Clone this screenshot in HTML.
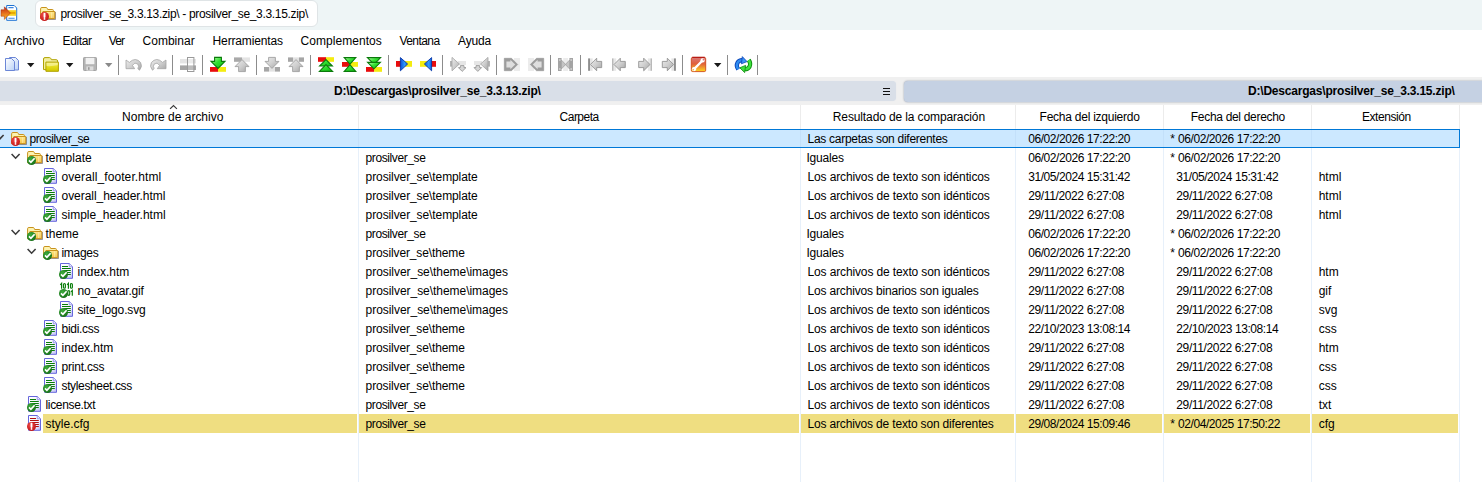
<!DOCTYPE html><html><head><meta charset="utf-8"><title>WinMerge</title><style>
*{box-sizing:border-box;margin:0;padding:0}
html,body{width:1482px;height:482px;overflow:hidden;background:#fff}
body{font-family:"Liberation Sans",sans-serif;font-size:12px;color:#000;position:relative}
.abs{position:absolute}
.t{position:absolute;white-space:pre;line-height:14px;height:14px}
#title{left:0;top:0;width:1482px;height:30px;background:#eef5f6}
#tab{left:35px;top:0;width:283px;height:27px;background:#fff;border-radius:6px;border:1px solid #dfe4e6}
#pbar{left:0;top:77px;width:1482px;height:28px;background:#f0f0f0}
#p1{left:-4px;top:81px;width:900px;height:20px;background:#d9dfe8;border-radius:4px;box-shadow:0 0 1px #d9dfe8}
#p2{left:903.5px;top:80.5px;width:590px;height:21px;background:#c5d1e3;border-radius:4px;box-shadow:0 0 2px #8a94a4}
.b{font-weight:bold}
.vl{position:absolute;top:128px;width:1px;height:354px;background:rgba(175,204,238,0.300)}
.hl{position:absolute;top:105px;width:1px;height:23px;background:#ececec}
.sel{position:absolute;left:-2px;width:1462px;height:19px;background:#cce8ff;border:1px solid #0078d7}
.dif{position:absolute;height:19px;background:#efde81}
.sep{position:absolute;top:55px;width:1px;height:20px;background:#8c8c8c}
svg{position:absolute;overflow:visible}
</style></head><body>
<svg width="0" height="0" style="position:absolute">
<defs>
<linearGradient id="gFold" x1="0" y1="0" x2="1" y2="1"><stop offset="0" stop-color="#fff6c4"/><stop offset="0.55" stop-color="#fbd96a"/><stop offset="1" stop-color="#eeb236"/></linearGradient>
<linearGradient id="gFoldY" x1="0" y1="0" x2="0" y2="1"><stop offset="0" stop-color="#f6f08a"/><stop offset="0.5" stop-color="#e4dc1c"/><stop offset="1" stop-color="#d2c800"/></linearGradient>
<radialGradient id="gGreen" cx="0.4" cy="0.35" r="0.7"><stop offset="0" stop-color="#3fae3f"/><stop offset="1" stop-color="#146c14"/></radialGradient>
<radialGradient id="gRed" cx="0.4" cy="0.35" r="0.7"><stop offset="0" stop-color="#f04a4a"/><stop offset="1" stop-color="#c01414"/></radialGradient>
<linearGradient id="gPage" x1="0" y1="0" x2="1" y2="1"><stop offset="0" stop-color="#ffffff"/><stop offset="0.6" stop-color="#f4f4ff"/><stop offset="1" stop-color="#b8b8f4"/></linearGradient>
<linearGradient id="gDoc" x1="0" y1="0" x2="1" y2="1"><stop offset="0" stop-color="#ffffff"/><stop offset="1" stop-color="#b9d2f7"/></linearGradient>
<linearGradient id="gGray" x1="0" y1="0" x2="1" y2="1"><stop offset="0" stop-color="#ececec"/><stop offset="0.5" stop-color="#cfcfcf"/><stop offset="1" stop-color="#a4a4a4"/></linearGradient>
<linearGradient id="gGrn" x1="0" y1="0" x2="1" y2="1"><stop offset="0" stop-color="#c8ffb8"/><stop offset="0.45" stop-color="#30e030"/><stop offset="1" stop-color="#10b810"/></linearGradient>
<linearGradient id="gBlue" x1="0" y1="0" x2="1" y2="0"><stop offset="0" stop-color="#0a4fd8"/><stop offset="0.6" stop-color="#2f9bff"/><stop offset="1" stop-color="#0a58e0"/></linearGradient>
<linearGradient id="gOpt" x1="0" y1="0" x2="0" y2="1"><stop offset="0" stop-color="#d87878"/><stop offset="0.45" stop-color="#e0603a"/><stop offset="1" stop-color="#ffd820"/></linearGradient>

<g id="ov-ok"><circle cx="4.500" cy="11.450" r="4.500" fill="url(#gGreen)"/><path d="M2 11.4 L3.9 13.3 L7.6 9.2" fill="none" stroke="#fff" stroke-width="1.7"/></g>
<g id="ov-bad"><circle cx="4.500" cy="11.450" r="4.500" fill="url(#gRed)"/><path d="M4.5 8.6 V12" stroke="#fff" stroke-width="1.9" stroke-linecap="round"/><circle cx="4.5" cy="13.9" r="0.9" fill="#fff"/></g>

<g id="folder">
 <path d="M0.600 13.600 V3.700 Q0.600 2.500 1.900 2.500 H6 Q6.900 2.500 7.300 3.400 L7.700 4.500 H12.300 Q13.400 4.500 13.400 5.600 V13.600 Z" fill="#fdf3b0" stroke="#c8921c" stroke-width="1"/>
 <path d="M15.500 7 V14.500 H3" fill="none" stroke="#50506a" stroke-width="1" opacity="0.600"/>
 <path d="M2.900 6.500 H14.800 V13.700 H0.700 Z" fill="url(#gFold)" stroke="#c8921c" stroke-width="1"/>
 <path d="M11.500 7.200 V13 M13 7.200 V13" stroke="#fff6c0" stroke-width="0.700" opacity="0.800"/>
</g>
<symbol id="i-fd" viewBox="0 0 16 16" overflow="visible"><use href="#folder"/><use href="#ov-bad"/></symbol>
<symbol id="i-fs" viewBox="0 0 16 16" overflow="visible"><use href="#folder"/><use href="#ov-ok"/></symbol>

<g id="page">
 <path d="M1.5 0.5 H10.3 L13.5 3.7 V15.300 H1.500 Z" fill="url(#gPage)" stroke="#6666dc" stroke-width="1"/>
 <path d="M10.2 0.6 V3.8 H13.4" fill="#e6e6ff" stroke="#7a7ae0" stroke-width="0.7"/>
</g>
<symbol id="i-ts" viewBox="0 0 16 16" overflow="visible"><use href="#page"/>
 <path d="M3 3.5 H9 M3 5.500 H11.800 M5 7.500 H11.800 M7 9.500 H11.800 M8 11.500 H11.800" stroke="#0a7d0a" stroke-width="1.050"/><use href="#ov-ok"/></symbol>
<symbol id="i-td" viewBox="0 0 16 16" overflow="visible"><use href="#page"/>
 <path d="M3 3.5 H9 M3 5.500 H11.800 M5 7.500 H11.800 M7 9.500 H11.800 M8 11.500 H11.800" stroke="#b01010" stroke-width="1.050"/><use href="#ov-bad"/></symbol>
<symbol id="i-bs" viewBox="0 0 16 16" overflow="visible"><path d="M1.30 2.80 L2.60 1.40 V6.70 M8.10 2.80 L9.40 1.40 V6.70 M12.00 9.90 L13.30 8.50 V13.80" fill="none" stroke="#0a7d0a" stroke-width="1.2" stroke-linejoin="miter"/><rect x="4.50" y="1.50" width="1.9" height="4.7" rx="0.95" fill="none" stroke="#0a7d0a" stroke-width="1.15"/><rect x="11.50" y="1.50" width="1.9" height="4.7" rx="0.95" fill="none" stroke="#0a7d0a" stroke-width="1.15"/><rect x="8.80" y="8.60" width="1.9" height="4.7" rx="0.95" fill="none" stroke="#0a7d0a" stroke-width="1.15"/><use href="#ov-ok"/></symbol>
<symbol id="i-app" viewBox="0 0 18 16" overflow="visible">
 <path d="M6.700 0.500 H14.200 L16.700 3 V15.300 H6.700 Z" fill="#fff" stroke="#1c72d4" stroke-width="1"/>
 <path d="M8.400 2.600 H13.600 M8.400 13.300 H14.600" stroke="#3c86e0" stroke-width="1.100"/>
 <rect x="7.200" y="5.200" width="9" height="5.600" fill="#f8d020"/>
 <rect x="9.400" y="7" width="6" height="1.900" fill="#e8a800"/>
 <linearGradient id="gArr" x1="0" y1="0" x2="0" y2="1"><stop offset="0" stop-color="#c02810"/><stop offset="0.55" stop-color="#e87820"/><stop offset="1" stop-color="#ffc020"/></linearGradient>
 <path d="M1 4.800 H4.400 V1.800 L10.400 8 L4.400 14.400 V11.200 H1 Z" fill="url(#gArr)" stroke="#a82810" stroke-width="0.500"/>
</symbol>
</defs>
</svg>

<div id="title" class="abs"></div><div id="tab" class="abs"></div>
<svg style="left:40px;top:5px" width="16" height="16"><use href="#i-fd"/></svg>
<svg style="left:0px;top:5px" width="18" height="16"><use href="#i-app"/></svg>
<div id="pbar" class="abs"></div><div id="p1" class="abs"></div><div id="p2" class="abs"></div>
<div class="abs" style="left:883px;top:88px;width:7px;height:1px;background:#111"></div>
<div class="abs" style="left:883px;top:91px;width:7px;height:1px;background:#111"></div>
<div class="abs" style="left:883px;top:94px;width:7px;height:1px;background:#111"></div>
<div class="hl" style="left:358px"></div>
<div class="hl" style="left:800px"></div>
<div class="hl" style="left:1015px"></div>
<div class="hl" style="left:1163px"></div>
<div class="hl" style="left:1311px"></div>
<div class="hl" style="left:1459px"></div>
<svg style="left:169px;top:104px" width="10" height="6"><path d="M1.5 4.5 L4.5 1.5 L7.5 4.5" fill="none" stroke="#3c3c3c" stroke-width="1.150" stroke-linecap="square"/></svg>
<div class="sep" style="left:118px"></div>
<div class="sep" style="left:172px"></div>
<div class="sep" style="left:202px"></div>
<div class="sep" style="left:256px"></div>
<div class="sep" style="left:310px"></div>
<div class="sep" style="left:388px"></div>
<div class="sep" style="left:442px"></div>
<div class="sep" style="left:496px"></div>
<div class="sep" style="left:550px"></div>
<div class="sep" style="left:580px"></div>
<div class="sep" style="left:682px"></div>
<div class="sep" style="left:727px"></div>
<div class="sep" style="left:757px"></div>
<svg style="left:0;top:52px" width="770" height="26" viewBox="0 52 770 26">
<!-- dropdown arrows -->
<path d="M27 63 h7.4 l-3.7 4.2z M66 63 h7.4 l-3.7 4.2z M714 63 h7.4 l-3.7 4.2z" fill="#1a1a1a"/>
<path d="M105 63 h7.4 l-3.7 4.2z" fill="#8a8a8a"/>
<!-- new docs -->
<g>
 <path d="M9.5 57.5 h6 l3 3 v9.5 h-9z" fill="url(#gDoc)" stroke="#6b86d6" stroke-width="1"/>
 <path d="M5.5 58.5 h6 l3 3 v9 h-9z" fill="url(#gDoc)" stroke="#6b86d6" stroke-width="1"/>
</g>
<!-- open folder (yellow) -->
<g>
 <path d="M43.500 69.600 V59 Q43.500 57.600 45 57.600 H49.400 Q50.400 57.600 50.900 58.600 L51.400 59.700 H56.200 Q57.600 59.700 57.600 61 V69.600 Z" fill="#f2eea0" stroke="#b0a200" stroke-width="1"/>
 <path d="M45.900 62.100 H58.400 V71.300 H45.900 Z" fill="url(#gFoldY)" stroke="#b0a200" stroke-width="1"/>
 <path d="M46.600 62.900 H57.700 V65 Q52 66.600 46.600 66Z" fill="#f6f29a" opacity="0.700"/>
</g>
<!-- save (gray) -->
<g>
 <rect x="83.5" y="57.5" width="13" height="13" rx="0.8" fill="#b4b4b4" stroke="#a2a2a2"/>
 <rect x="85.6" y="57.8" width="8.8" height="6.4" fill="#f1f1f1"/>
 <rect x="86.4" y="66.4" width="7" height="4.2" fill="#dcdcdc"/>
 <rect x="88" y="67.2" width="1.6" height="2.6" fill="#9a9a9a"/>
</g>
<!-- undo / redo -->
<g fill="url(#gGray)" stroke="#a4a4a4" stroke-width="0.800">
 <path d="M126 60 L129.400 62.400 Q135.500 56.600 140.600 62.500 Q142.800 66.500 139.500 70.200 L137.800 68.600 Q139.600 66.200 137.600 63.900 Q134.800 61.700 132.400 65.400 L134.700 68.700 L126 68.700 Z"/>
 <path d="M166.000 60.000 L162.600 62.400 Q156.500 56.600 151.400 62.500 Q149.200 66.500 152.500 70.200 L154.200 68.600 Q152.400 66.200 154.400 63.900 Q157.200 61.700 159.600 65.400 L157.300 68.700 L166.000 68.700 Z"/>
</g>
<!-- select line difference -->
<g>
 <rect x="180" y="59" width="16" height="4.400" fill="#e4e4e4"/>
 <rect x="180" y="65.400" width="16" height="4.600" fill="#a6a6a6"/>
 <rect x="187.500" y="57.500" width="6.400" height="14" fill="#fff" fill-opacity="0.250" stroke="#9a9a9a" stroke-width="1"/>
</g>
<!-- next diff -->
<g>
 <rect x="210" y="67" width="8" height="4.8" fill="#e80c0c"/><rect x="218" y="67" width="8" height="4.8" fill="#f4ec10"/>
 <path d="M214.6 57.4 h6.8 v4 h3.6 l-7 7 l-7 -7 h3.6z" fill="url(#gGrn)" stroke="#0a7a0a" stroke-width="1.100"/>
</g>
<!-- prev diff (gray) -->
<g>
 <rect x="234" y="57.4" width="8" height="4.4" fill="#a9a9a9"/><rect x="242" y="57.4" width="8" height="4.4" fill="#e4e4e4"/>
 <path d="M238.6 71.6 h6.8 v-5 h3.6 l-7 -7 l-7 7 h3.6z" fill="url(#gGray)" stroke="#a0a0a0" stroke-width="0.9"/>
</g>
<!-- next conflict gray -->
<g>
 <rect x="264" y="67" width="5" height="4.6" fill="#a6a6a6"/><rect x="269" y="67" width="6" height="4.6" fill="#e2e2e2"/><rect x="275" y="67" width="5" height="4.6" fill="#a6a6a6"/>
 <path d="M268.6 57.4 h6.8 v4 h3.6 l-7 7 l-7 -7 h3.6z" fill="url(#gGray)" stroke="#a0a0a0" stroke-width="0.9"/>
</g>
<!-- prev conflict gray -->
<g>
 <rect x="288" y="57.4" width="5" height="4.4" fill="#a6a6a6"/><rect x="293" y="57.4" width="6" height="4.4" fill="#e2e2e2"/><rect x="299" y="57.4" width="5" height="4.4" fill="#a6a6a6"/>
 <path d="M292.6 71.6 h6.8 v-5 h3.6 l-7 -7 l-7 7 h3.6z" fill="url(#gGray)" stroke="#a0a0a0" stroke-width="0.9"/>
</g>
<!-- first diff -->
<g>
 <rect x="318" y="57.2" width="8" height="4.6" fill="#e80c0c"/><rect x="326" y="57.2" width="8" height="4.6" fill="#f4ec10"/>
 <path d="M326 59.6 l6.4 6.4 h-12.8z" fill="url(#gGrn)" stroke="#0a7a0a" stroke-width="1.100"/>
 <path d="M326 64.6 l6.6 6.8 h-13.2z" fill="url(#gGrn)" stroke="#0a7a0a" stroke-width="1.100"/>
</g>
<!-- current diff -->
<g>
 <rect x="342" y="62" width="8" height="4.8" fill="#e80c0c"/><rect x="350" y="62" width="8" height="4.8" fill="#f4ec10"/>
 <path d="M344.2 57.6 h11.6 l-5.8 6.6z" fill="url(#gGrn)" stroke="#0a7a0a" stroke-width="1.100"/>
 <path d="M344.2 71.4 h11.6 l-5.8 -6.6z" fill="url(#gGrn)" stroke="#0a7a0a" stroke-width="1.100"/>
</g>
<!-- last diff -->
<g>
 <rect x="366" y="67" width="8" height="4.8" fill="#e80c0c"/><rect x="374" y="67" width="8" height="4.8" fill="#f4ec10"/>
 <path d="M367.4 57.6 h13.2 l-6.6 6.8z" fill="url(#gGrn)" stroke="#0a7a0a" stroke-width="1.100"/>
 <path d="M367.6 62.4 h12.8 l-6.4 6.4z" fill="url(#gGrn)" stroke="#0a7a0a" stroke-width="1.100"/>
</g>
<!-- copy right -->
<g>
 <rect x="396" y="61" width="8" height="5.8" fill="#e80c0c"/><rect x="404" y="61" width="8" height="5.8" fill="#f4ec10"/>
 <path d="M400.4 57.6 l7.2 6.4 l-7.2 6.8z" fill="url(#gBlue)" stroke="#0838a8" stroke-width="0.9"/>
</g>
<!-- copy left -->
<g>
 <rect x="420" y="61" width="8" height="5.8" fill="#f4ec10"/><rect x="428" y="61" width="8" height="5.8" fill="#e80c0c"/>
 <path d="M431.6 57.6 l-7.2 6.4 l7.2 6.8z" fill="url(#gBlue)" stroke="#0838a8" stroke-width="0.9"/>
</g>
<!-- copy right & advance (gray) -->
<g>
 <rect x="450" y="61" width="2.4" height="5.6" fill="#b4b4b4"/><rect x="458" y="61" width="8" height="4" fill="#e6e6e6"/>
 <path d="M452 57.4 l7.4 6.6 l-7.4 6.8z" fill="url(#gGray)" stroke="#a2a2a2" stroke-width="0.8"/>
 <path d="M460.4 65.6 h3.6 v2 h2 l-3.8 3.8 l-3.8 -3.8 h2z" fill="#d6d6d6" stroke="#9a9a9a" stroke-width="0.900"/>
</g>
<g>
 <rect x="487.6" y="61" width="2.4" height="5.6" fill="#b4b4b4"/><rect x="474" y="61" width="8" height="4" fill="#e6e6e6"/>
 <path d="M488 57.4 l-7.4 6.6 l7.4 6.8z" fill="url(#gGray)" stroke="#a2a2a2" stroke-width="0.8"/>
 <path d="M476 65.6 h3.600 v2 h2 l-3.800 3.800 l-3.800 -3.800 h2z" fill="#d6d6d6" stroke="#9a9a9a" stroke-width="0.900"/>
</g>
<!-- all right (gray) -->
<g>
 <rect x="514" y="58" width="6" height="13" fill="#ececec"/>
 <path d="M504.300 58.300 h7.200 l6.200 6.200 l-6.200 6.200 h-7.200z" fill="#9c9c9c" stroke="#949494" stroke-width="0.600"/>
 <path d="M506.400 61.600 h4 v-1.800 l4.800 4.700 l-4.800 4.700 v-1.800 h-4z" fill="#dedede"/>
</g>
<g>
 <rect x="528" y="58" width="6" height="13" fill="#ececec"/>
 <path d="M543.700 58.300 h-7.200 l-6.200 6.200 l6.200 6.200 h7.200z" fill="#9c9c9c" stroke="#949494" stroke-width="0.600"/>
 <path d="M541.600 61.600 h-4 v-1.800 l-4.800 4.700 l4.800 4.700 v-1.800 h4z" fill="#dedede"/>
</g>
<!-- auto merge -->
<g>
 <rect x="563.200" y="58" width="4.800" height="13" fill="#ececec"/>
 <rect x="558" y="58" width="3.600" height="13" fill="#a4a4a4"/><rect x="569.400" y="58" width="3.600" height="13" fill="#a4a4a4"/>
 <path d="M561.400 60 L565.600 64.500 L561.400 69z M569.600 60 L565.400 64.500 L569.600 69z" fill="#c4c4c4" stroke="#9c9c9c" stroke-width="0.700"/>
 <rect x="559" y="59" width="1.600" height="2" fill="#c8c8c8"/><rect x="559" y="68" width="1.600" height="2" fill="#c8c8c8"/><rect x="570.400" y="59" width="1.600" height="2" fill="#c8c8c8"/><rect x="570.400" y="68" width="1.600" height="2" fill="#c8c8c8"/>
</g>
<!-- nav arrows gray -->
<rect x="590" y="58.400" width="2.600" height="12.400" fill="#e4e4e4"/><rect x="613.200" y="58.400" width="3" height="12.400" fill="#e8e8e8"/>
<rect x="647.800" y="58.400" width="3" height="12.400" fill="#e8e8e8"/><rect x="671.400" y="58.400" width="2.600" height="12.400" fill="#e4e4e4"/>
<g fill="url(#gGray)" stroke="#939393" stroke-width="0.900">
 <path d="M590.400 64.500 l6.300 -6.300 v3.200 h5 v6.200 h-5 v3.200z"/>
 <path d="M614 64.500 l6.300 -6.300 v3.200 h5 v6.200 h-5 v3.200z"/>
 <path d="M650 64.500 l-6.300 -6.300 v3.200 h-5 v6.200 h5 v3.200z"/>
 <path d="M673.600 64.500 l-6.300 -6.300 v3.200 h-5 v6.200 h5 v3.200z"/>
</g>
<rect x="588.100" y="58.400" width="1.900" height="12.400" fill="#8e8e8e"/>
<rect x="612.300" y="58.400" width="1" height="12.400" fill="#9c9c9c"/>
<rect x="650.700" y="58.400" width="1" height="12.400" fill="#9c9c9c"/>
<rect x="674" y="58.400" width="1.900" height="12.400" fill="#8e8e8e"/>
<!-- options -->
<g>
 <rect x="691.300" y="57.400" width="14.400" height="14.200" rx="1.400" fill="url(#gOpt)" stroke="#d04a1a" stroke-width="0.900"/>
 <path d="M692.200 57.300 H704.800" stroke="#b00c0c" stroke-width="1"/>
 <path d="M693.800 69.400 L702.800 60.200" stroke="#fff" stroke-width="2.300" stroke-linecap="round"/>
 <circle cx="694" cy="69.200" r="2.100" fill="#fff"/><circle cx="693.200" cy="69.800" r="0.800" fill="#f0b030"/>
 <circle cx="702.600" cy="60.400" r="2.100" fill="#fff"/><circle cx="703.500" cy="59.700" r="0.900" fill="#d87878"/>
</g>
<!-- refresh -->
<g fill="none" stroke-linecap="butt">
 <path d="M738.200 69.400 C735 64.500 737.800 59.800 743 60.200" stroke="#0a44b8" stroke-width="4.200"/>
 <path d="M738.200 69.400 C735 64.500 737.800 59.800 743 60.200" stroke="#2f8cf0" stroke-width="2.400"/>
 <path d="M742.300 56.600 L747 61.600 L741.400 63.800 Z" fill="#3a94f4" stroke="#0a44b8" stroke-width="0.800"/>
 <path d="M748.800 60 C752 65 749.200 69.600 744 69.200" stroke="#0a8a0a" stroke-width="4.200"/>
 <path d="M748.800 60 C752 65 749.200 69.600 744 69.200" stroke="#3ee03e" stroke-width="2.400"/>
 <path d="M744.700 72.600 L739.800 67.800 L745.600 65.400 Z" fill="#3ee03e" stroke="#0a8a0a" stroke-width="0.800"/>
</g>
</svg>

<div class="sel" style="top:129px"></div>
<svg style="left:-5px;top:134px" width="10" height="8"><path d="M0.6 1 L4.6 5.2 L8.6 1" fill="none" stroke="#3c3c3c" stroke-width="1.600"/></svg>
<svg style="left:11px;top:130px" width="16" height="16"><use href="#i-fd"/></svg>
<svg style="left:11px;top:153px" width="10" height="8"><path d="M0.6 1 L4.6 5.2 L8.6 1" fill="none" stroke="#3c3c3c" stroke-width="1.600"/></svg>
<svg style="left:27px;top:149px" width="16" height="16"><use href="#i-fs"/></svg>
<svg style="left:43px;top:168px" width="16" height="16"><use href="#i-ts"/></svg>
<svg style="left:43px;top:187px" width="16" height="16"><use href="#i-ts"/></svg>
<svg style="left:43px;top:206px" width="16" height="16"><use href="#i-ts"/></svg>
<svg style="left:11px;top:229px" width="10" height="8"><path d="M0.6 1 L4.6 5.2 L8.6 1" fill="none" stroke="#3c3c3c" stroke-width="1.600"/></svg>
<svg style="left:27px;top:225px" width="16" height="16"><use href="#i-fs"/></svg>
<svg style="left:27px;top:248px" width="10" height="8"><path d="M0.6 1 L4.6 5.2 L8.6 1" fill="none" stroke="#3c3c3c" stroke-width="1.600"/></svg>
<svg style="left:43px;top:244px" width="16" height="16"><use href="#i-fs"/></svg>
<svg style="left:59px;top:263px" width="16" height="16"><use href="#i-ts"/></svg>
<svg style="left:59px;top:282px" width="16" height="16"><use href="#i-bs"/></svg>
<svg style="left:59px;top:301px" width="16" height="16"><use href="#i-ts"/></svg>
<svg style="left:43px;top:320px" width="16" height="16"><use href="#i-ts"/></svg>
<svg style="left:43px;top:339px" width="16" height="16"><use href="#i-ts"/></svg>
<svg style="left:43px;top:358px" width="16" height="16"><use href="#i-ts"/></svg>
<svg style="left:43px;top:377px" width="16" height="16"><use href="#i-ts"/></svg>
<svg style="left:27px;top:396px" width="16" height="16"><use href="#i-ts"/></svg>
<div class="dif" style="top:414px;left:43px;width:314px"></div>
<div class="dif" style="top:414px;left:359px;width:440px"></div>
<div class="dif" style="top:414px;left:801px;width:213px"></div>
<div class="dif" style="top:414px;left:1016px;width:146px"></div>
<div class="dif" style="top:414px;left:1164px;width:146px"></div>
<div class="dif" style="top:414px;left:1312px;width:146px"></div>
<svg style="left:27px;top:415px" width="16" height="16"><use href="#i-td"/></svg>
<div class="vl" style="left:358px"></div>
<div class="vl" style="left:800px"></div>
<div class="vl" style="left:1015px"></div>
<div class="vl" style="left:1163px"></div>
<div class="vl" style="left:1311px"></div>
<div class="vl" style="left:1459px"></div>
<div class="sel" style="top:129px;background:none"></div>
<div class="t" style="left:60.40px;top:6.5px;letter-spacing:-0.326px">prosilver_se_3.3.13.zip\ - prosilver_se_3.3.15.zip\</div>
<div class="t" style="left:4.40px;top:34px;letter-spacing:-0.007px">Archivo</div>
<div class="t" style="left:62.60px;top:34px;letter-spacing:-0.370px">Editar</div>
<div class="t" style="left:108.80px;top:34px;letter-spacing:-0.958px">Ver</div>
<div class="t" style="left:142.50px;top:34px;letter-spacing:0.025px">Combinar</div>
<div class="t" style="left:212.60px;top:34px;letter-spacing:-0.148px">Herramientas</div>
<div class="t" style="left:300.60px;top:34px;letter-spacing:0.045px">Complementos</div>
<div class="t" style="left:399.40px;top:34px;letter-spacing:-0.545px">Ventana</div>
<div class="t" style="left:458.10px;top:34px;letter-spacing:-0.184px">Ayuda</div>
<div class="t b" style="left:334.00px;top:84px;letter-spacing:-0.202px">D:\Descargas\prosilver_se_3.3.13.zip\</div>
<div class="t b" style="left:1248.00px;top:84px;letter-spacing:-0.202px">D:\Descargas\prosilver_se_3.3.15.zip\</div>
<div class="t" style="left:122.10px;top:110px;letter-spacing:-0.007px">Nombre de archivo</div>
<div class="t" style="left:559.60px;top:110px;letter-spacing:-0.520px">Carpeta</div>
<div class="t" style="left:832.80px;top:110px;letter-spacing:-0.121px">Resultado de la comparación</div>
<div class="t" style="left:1039.60px;top:110px;letter-spacing:-0.248px">Fecha del izquierdo</div>
<div class="t" style="left:1190.80px;top:110px;letter-spacing:-0.308px">Fecha del derecho</div>
<div class="t" style="left:1361.90px;top:110px;letter-spacing:-0.428px">Extensión</div>
<div class="t" style="left:29.50px;top:131.5px;letter-spacing:-0.402px">prosilver_se</div>
<div class="t" style="left:807.50px;top:131.5px;letter-spacing:-0.274px">Las carpetas son diferentes</div>
<div class="t" style="left:1028.20px;top:131.5px;letter-spacing:-0.435px">06/02/2026 17:22:20</div>
<div class="t" style="left:1170.20px;top:131.5px">*</div>
<div class="t" style="left:1178.10px;top:131.5px;letter-spacing:-0.435px">06/02/2026 17:22:20</div>
<div class="t" style="left:45.50px;top:150.5px;letter-spacing:0.021px">template</div>
<div class="t" style="left:365.60px;top:150.5px;letter-spacing:-0.402px">prosilver_se</div>
<div class="t" style="left:806.50px;top:150.5px;letter-spacing:-0.216px">Iguales</div>
<div class="t" style="left:1028.20px;top:150.5px;letter-spacing:-0.435px">06/02/2026 17:22:20</div>
<div class="t" style="left:1170.20px;top:150.5px">*</div>
<div class="t" style="left:1178.10px;top:150.5px;letter-spacing:-0.435px">06/02/2026 17:22:20</div>
<div class="t" style="left:61.50px;top:169.5px;letter-spacing:0.090px">overall_footer.html</div>
<div class="t" style="left:365.60px;top:169.5px;letter-spacing:-0.099px">prosilver_se\template</div>
<div class="t" style="left:807.50px;top:169.5px;letter-spacing:-0.132px">Los archivos de texto son idénticos</div>
<div class="t" style="left:1028.20px;top:169.5px;letter-spacing:-0.435px">31/05/2024 15:31:42</div>
<div class="t" style="left:1176.30px;top:169.5px;letter-spacing:-0.435px">31/05/2024 15:31:42</div>
<div class="t" style="left:1318.70px;top:169.5px">html</div>
<div class="t" style="left:61.50px;top:188.5px;letter-spacing:-0.048px">overall_header.html</div>
<div class="t" style="left:365.60px;top:188.5px;letter-spacing:-0.099px">prosilver_se\template</div>
<div class="t" style="left:807.50px;top:188.5px;letter-spacing:-0.132px">Los archivos de texto son idénticos</div>
<div class="t" style="left:1028.20px;top:188.5px;letter-spacing:-0.369px">29/11/2022 6:27:08</div>
<div class="t" style="left:1176.30px;top:188.5px;letter-spacing:-0.369px">29/11/2022 6:27:08</div>
<div class="t" style="left:1318.70px;top:188.5px">html</div>
<div class="t" style="left:61.50px;top:207.5px">simple_header.html</div>
<div class="t" style="left:365.60px;top:207.5px;letter-spacing:-0.099px">prosilver_se\template</div>
<div class="t" style="left:807.50px;top:207.5px;letter-spacing:-0.132px">Los archivos de texto son idénticos</div>
<div class="t" style="left:1028.20px;top:207.5px;letter-spacing:-0.369px">29/11/2022 6:27:08</div>
<div class="t" style="left:1176.30px;top:207.5px;letter-spacing:-0.369px">29/11/2022 6:27:08</div>
<div class="t" style="left:1318.70px;top:207.5px">html</div>
<div class="t" style="left:45.50px;top:226.5px;letter-spacing:-0.019px">theme</div>
<div class="t" style="left:365.60px;top:226.5px;letter-spacing:-0.402px">prosilver_se</div>
<div class="t" style="left:806.50px;top:226.5px;letter-spacing:-0.216px">Iguales</div>
<div class="t" style="left:1028.20px;top:226.5px;letter-spacing:-0.435px">06/02/2026 17:22:20</div>
<div class="t" style="left:1170.20px;top:226.5px">*</div>
<div class="t" style="left:1178.10px;top:226.5px;letter-spacing:-0.435px">06/02/2026 17:22:20</div>
<div class="t" style="left:61.50px;top:245.5px;letter-spacing:-0.297px">images</div>
<div class="t" style="left:365.60px;top:245.5px;letter-spacing:-0.124px">prosilver_se\theme</div>
<div class="t" style="left:806.50px;top:245.5px;letter-spacing:-0.216px">Iguales</div>
<div class="t" style="left:1028.20px;top:245.5px;letter-spacing:-0.435px">06/02/2026 17:22:20</div>
<div class="t" style="left:1170.20px;top:245.5px">*</div>
<div class="t" style="left:1178.10px;top:245.5px;letter-spacing:-0.435px">06/02/2026 17:22:20</div>
<div class="t" style="left:77.50px;top:264.5px;letter-spacing:-0.041px">index.htm</div>
<div class="t" style="left:365.60px;top:264.5px;letter-spacing:-0.046px">prosilver_se\theme\images</div>
<div class="t" style="left:807.50px;top:264.5px;letter-spacing:-0.132px">Los archivos de texto son idénticos</div>
<div class="t" style="left:1028.20px;top:264.5px;letter-spacing:-0.369px">29/11/2022 6:27:08</div>
<div class="t" style="left:1176.30px;top:264.5px;letter-spacing:-0.369px">29/11/2022 6:27:08</div>
<div class="t" style="left:1318.70px;top:264.5px">htm</div>
<div class="t" style="left:77.50px;top:283.5px;letter-spacing:-0.199px">no_avatar.gif</div>
<div class="t" style="left:365.60px;top:283.5px;letter-spacing:-0.046px">prosilver_se\theme\images</div>
<div class="t" style="left:807.50px;top:283.5px;letter-spacing:-0.171px">Los archivos binarios son iguales</div>
<div class="t" style="left:1028.20px;top:283.5px;letter-spacing:-0.369px">29/11/2022 6:27:08</div>
<div class="t" style="left:1176.30px;top:283.5px;letter-spacing:-0.369px">29/11/2022 6:27:08</div>
<div class="t" style="left:1318.70px;top:283.5px">gif</div>
<div class="t" style="left:77.50px;top:302.5px;letter-spacing:-0.156px">site_logo.svg</div>
<div class="t" style="left:365.60px;top:302.5px;letter-spacing:-0.046px">prosilver_se\theme\images</div>
<div class="t" style="left:807.50px;top:302.5px;letter-spacing:-0.132px">Los archivos de texto son idénticos</div>
<div class="t" style="left:1028.20px;top:302.5px;letter-spacing:-0.369px">29/11/2022 6:27:08</div>
<div class="t" style="left:1176.30px;top:302.5px;letter-spacing:-0.369px">29/11/2022 6:27:08</div>
<div class="t" style="left:1318.70px;top:302.5px">svg</div>
<div class="t" style="left:61.50px;top:321.5px;letter-spacing:-0.288px">bidi.css</div>
<div class="t" style="left:365.60px;top:321.5px;letter-spacing:-0.124px">prosilver_se\theme</div>
<div class="t" style="left:807.50px;top:321.5px;letter-spacing:-0.132px">Los archivos de texto son idénticos</div>
<div class="t" style="left:1028.20px;top:321.5px;letter-spacing:-0.435px">22/10/2023 13:08:14</div>
<div class="t" style="left:1176.30px;top:321.5px;letter-spacing:-0.435px">22/10/2023 13:08:14</div>
<div class="t" style="left:1318.70px;top:321.5px">css</div>
<div class="t" style="left:61.50px;top:340.5px;letter-spacing:-0.041px">index.htm</div>
<div class="t" style="left:365.60px;top:340.5px;letter-spacing:-0.124px">prosilver_se\theme</div>
<div class="t" style="left:807.50px;top:340.5px;letter-spacing:-0.132px">Los archivos de texto son idénticos</div>
<div class="t" style="left:1028.20px;top:340.5px;letter-spacing:-0.369px">29/11/2022 6:27:08</div>
<div class="t" style="left:1176.30px;top:340.5px;letter-spacing:-0.369px">29/11/2022 6:27:08</div>
<div class="t" style="left:1318.70px;top:340.5px">htm</div>
<div class="t" style="left:61.50px;top:359.5px;letter-spacing:-0.210px">print.css</div>
<div class="t" style="left:365.60px;top:359.5px;letter-spacing:-0.124px">prosilver_se\theme</div>
<div class="t" style="left:807.50px;top:359.5px;letter-spacing:-0.132px">Los archivos de texto son idénticos</div>
<div class="t" style="left:1028.20px;top:359.5px;letter-spacing:-0.369px">29/11/2022 6:27:08</div>
<div class="t" style="left:1176.30px;top:359.5px;letter-spacing:-0.369px">29/11/2022 6:27:08</div>
<div class="t" style="left:1318.70px;top:359.5px">css</div>
<div class="t" style="left:61.50px;top:378.5px;letter-spacing:-0.359px">stylesheet.css</div>
<div class="t" style="left:365.60px;top:378.5px;letter-spacing:-0.124px">prosilver_se\theme</div>
<div class="t" style="left:807.50px;top:378.5px;letter-spacing:-0.132px">Los archivos de texto son idénticos</div>
<div class="t" style="left:1028.20px;top:378.5px;letter-spacing:-0.369px">29/11/2022 6:27:08</div>
<div class="t" style="left:1176.30px;top:378.5px;letter-spacing:-0.369px">29/11/2022 6:27:08</div>
<div class="t" style="left:1318.70px;top:378.5px">css</div>
<div class="t" style="left:45.50px;top:397.5px;letter-spacing:-0.332px">license.txt</div>
<div class="t" style="left:365.60px;top:397.5px;letter-spacing:-0.402px">prosilver_se</div>
<div class="t" style="left:807.50px;top:397.5px;letter-spacing:-0.132px">Los archivos de texto son idénticos</div>
<div class="t" style="left:1028.20px;top:397.5px;letter-spacing:-0.369px">29/11/2022 6:27:08</div>
<div class="t" style="left:1176.30px;top:397.5px;letter-spacing:-0.369px">29/11/2022 6:27:08</div>
<div class="t" style="left:1318.70px;top:397.5px">txt</div>
<div class="t" style="left:45.50px;top:416.5px;letter-spacing:-0.005px">style.cfg</div>
<div class="t" style="left:365.60px;top:416.5px;letter-spacing:-0.402px">prosilver_se</div>
<div class="t" style="left:807.50px;top:416.5px;letter-spacing:-0.166px">Los archivos de texto son diferentes</div>
<div class="t" style="left:1028.20px;top:416.5px;letter-spacing:-0.435px">29/08/2024 15:09:46</div>
<div class="t" style="left:1170.20px;top:416.5px">*</div>
<div class="t" style="left:1178.10px;top:416.5px;letter-spacing:-0.435px">02/04/2025 17:50:22</div>
<div class="t" style="left:1318.70px;top:416.5px">cfg</div>
</body></html>
